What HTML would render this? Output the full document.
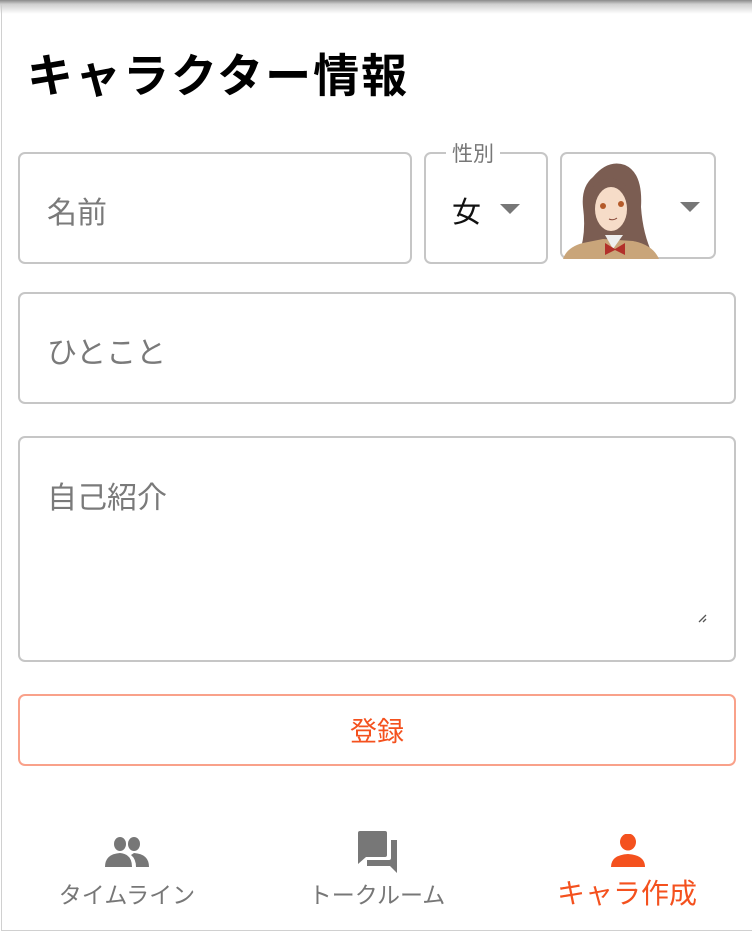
<!DOCTYPE html>
<html><head><meta charset="utf-8"><style>
*{box-sizing:border-box;margin:0;padding:0}
html,body{width:752px;height:934px;overflow:hidden;background:#fff;font-family:"Liberation Sans","Noto Sans CJK JP",sans-serif}
.page{position:absolute;left:1px;top:0;width:751px;height:931px;border-left:1px solid #d0d0d0;border-bottom:1px solid #d0d0d0}
.shadow{position:absolute;left:0;top:0;width:752px;height:14px;background:linear-gradient(#8a8a8a,#cfcfcf 30%,rgba(255,255,255,0))}
h1{position:absolute;left:27px;top:46px;font-size:46px;font-weight:bold;color:#000;letter-spacing:2px;line-height:60px}
.box{position:absolute;border:2px solid #c6c6c6;border-radius:7px}
.ph{position:absolute;color:#7a7a7a;font-size:30px}
.tri{position:absolute;width:0;height:0;border-left:10px solid transparent;border-right:10px solid transparent;border-top:10px solid #777}
.nav{position:absolute;top:876px;font-size:23px;color:#777;text-align:center;width:200px}
</style></head><body>
<div class="page"></div>
<div class="shadow"></div>
<h1>キャラクター情報</h1>

<div class="box" style="left:18px;top:152px;width:394px;height:112px"></div>
<div class="ph" style="left:47px;top:188px">名前</div>

<div class="box" style="left:424px;top:152px;width:124px;height:112px"></div>
<div style="position:absolute;left:446px;top:138px;padding:0 6px;background:#fff;color:#777;font-size:21px">性別</div>
<div style="position:absolute;left:452px;top:189px;font-size:29px;color:#111">女</div>
<div class="tri" style="left:500px;top:204px"></div>

<div class="box" style="left:560px;top:152px;width:156px;height:107px"></div>
<svg style="position:absolute;left:563px;top:157px" width="104" height="102" viewBox="0 0 104 102">
 <path d="M30 20 Q45 2 62 8 Q80 16 78 50 Q80 80 92 102 L14 102 Q24 80 20 50 Q18 30 30 20Z" fill="#7b5d52"/>
 <path d="M0 102 Q4 90 20 86 L40 82 L70 84 Q90 88 96 102Z" fill="#c9a57a"/>
 <path d="M42 78 L50 92 L60 78Z" fill="#eee"/>
 <path d="M42 86 L52 92 L62 86 L62 98 L52 93 L42 98Z" fill="#b2302a"/>
 <ellipse cx="48" cy="52" rx="16" ry="22" fill="#f6dcc8"/>
 <path d="M30 38 Q42 22 64 34 L62 28 Q46 14 30 30Z" fill="#7b5d52"/>
 <circle cx="40" cy="49" r="3" fill="#b45a2a"/><circle cx="58" cy="47" r="3" fill="#b45a2a"/>
 <path d="M46 62 Q50 64 54 61" stroke="#8a4a3a" fill="none" stroke-width="1"/>
</svg>
<div class="tri" style="left:680px;top:202px"></div>

<div class="box" style="left:18px;top:292px;width:718px;height:112px"></div>
<div class="ph" style="left:47px;top:328px">ひとこと</div>

<div class="box" style="left:18px;top:436px;width:718px;height:226px"></div>
<div class="ph" style="left:47px;top:473px">自己紹介</div>
<svg style="position:absolute;left:698px;top:614px" width="10" height="10"><path d="M1 8 L8 1 M5 8 L8 5" stroke="#555" stroke-width="1.3"/></svg>

<div class="box" style="left:18px;top:694px;width:718px;height:72px;border-color:#f9a18a"></div>
<div style="position:absolute;left:18px;top:710px;width:718px;text-align:center;font-size:27px;color:#f4511e">登録</div>

<svg style="position:absolute;left:104px;top:837px" width="46" height="30" viewBox="0 0 46 30">
 <ellipse cx="16" cy="7" rx="6" ry="7" fill="#777"/><ellipse cx="30" cy="7" rx="6" ry="7" fill="#777"/>
 <path d="M1 30 Q1 17 16 16 Q28 17 28 30Z" fill="#777"/><path d="M30 16 Q45 17 45 30 L32 30 Q32 22 27 18Z" fill="#777"/>
</svg>
<svg style="position:absolute;left:356px;top:831px" width="44" height="42" viewBox="0 0 44 42">
 <path d="M2 2 Q2 0 4 0 L29 0 Q31 0 31 2 L31 24 Q31 26 29 26 L10 26 L2 33Z" fill="#777"/>
 <path d="M35 9 L41 9 L41 42 L34 35 L11 35 L11 29 L33 29 Q35 29 35 27Z" fill="#777"/>
</svg>
<svg style="position:absolute;left:610px;top:834px" width="36" height="33" viewBox="0 0 36 33">
 <ellipse cx="18" cy="8" rx="8" ry="8.5" fill="#f4511e"/>
 <path d="M1 33 Q1 21 18 20 Q35 21 35 33Z" fill="#f4511e"/>
</svg>
<div class="nav" style="left:27px">タイムライン</div>
<div class="nav" style="left:277px">トークルーム</div>
<div class="nav" style="left:527px;color:#f4511e;font-size:28px;top:872px">キャラ作成</div>
</body></html>
